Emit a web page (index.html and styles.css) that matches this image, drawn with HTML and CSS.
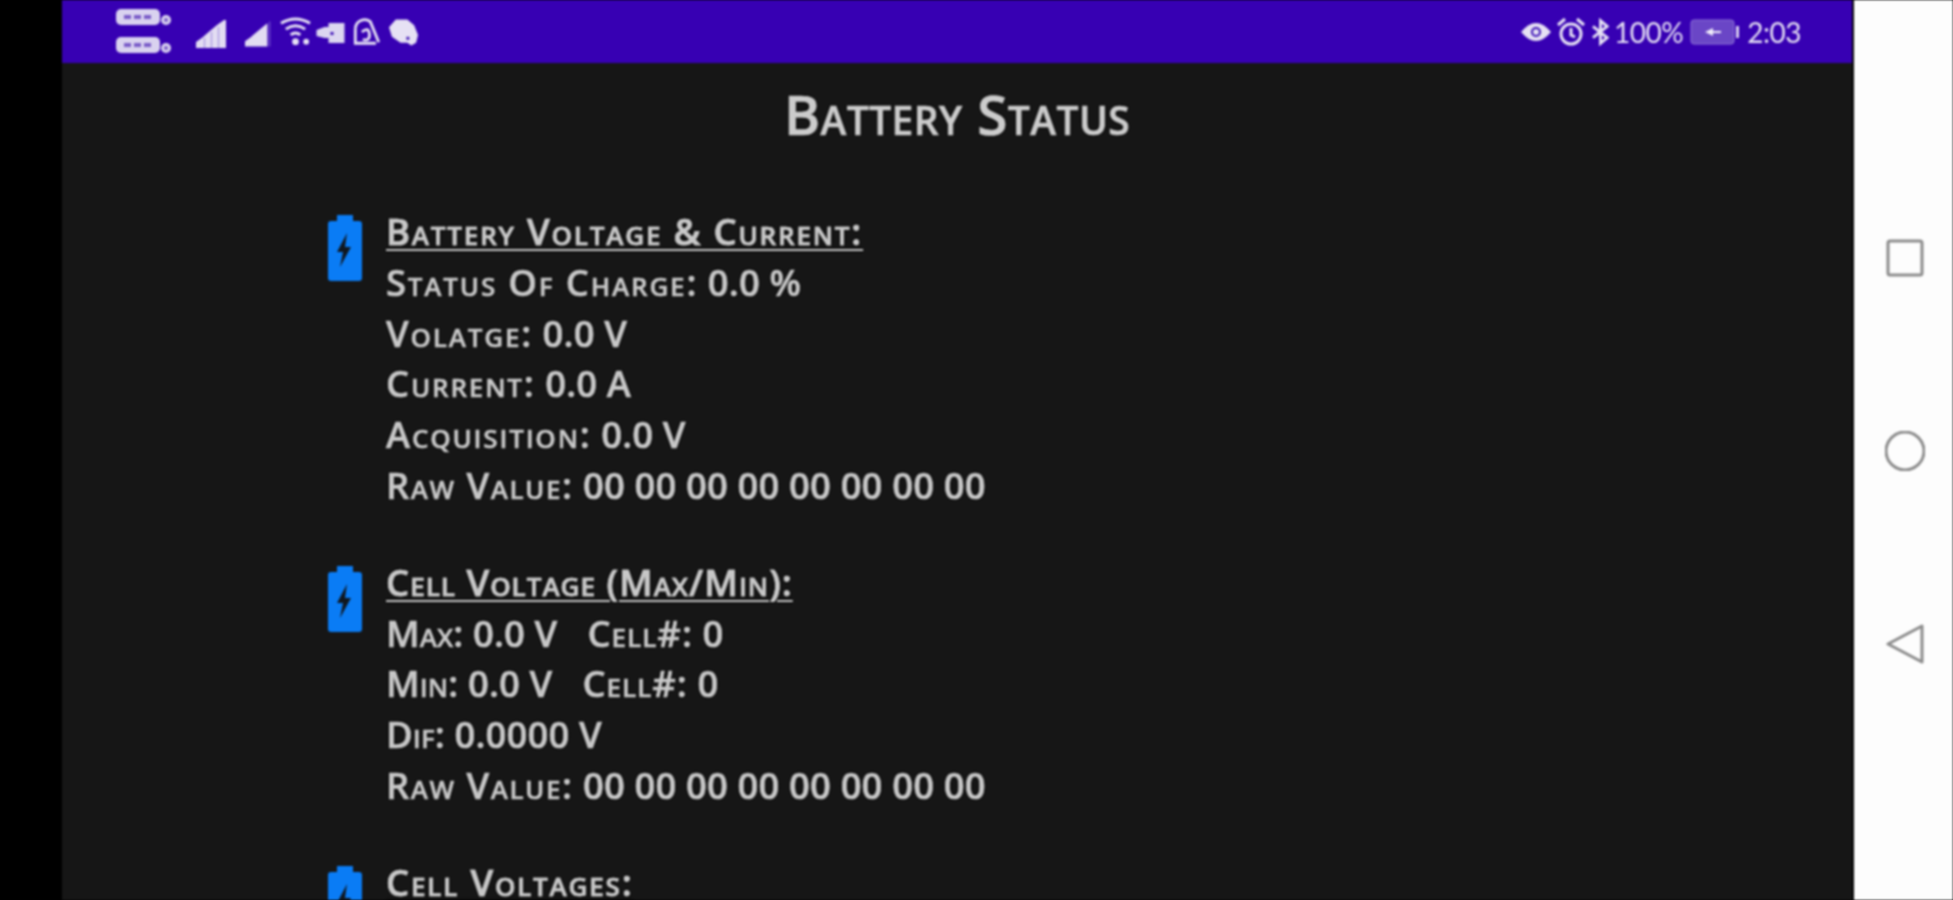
FILE: index.html
```html
<!DOCTYPE html>
<html lang="en">
<head>
<meta charset="utf-8">
<title>Battery Status</title>
<link rel="stylesheet" href="styles.css">
</head>
<body>
<div class="frame">
  <div class="screen">
    <header class="status">
      <div class="status-group">
        <svg class="sims" viewBox="0 0 56 46"><g fill="#d9d2ef"><rect x="0" y="0" width="44" height="16" rx="5"/><rect x="0" y="28" width="44" height="16" rx="5"/><circle cx="50" cy="11" r="5"/><circle cx="50" cy="39" r="5"/></g><g fill="#7a5cc8"><rect x="8" y="6" width="7" height="4"/><rect x="18" y="6" width="7" height="4"/><rect x="28" y="6" width="7" height="4"/><rect x="8" y="34" width="7" height="4"/><rect x="18" y="34" width="7" height="4"/><rect x="28" y="34" width="7" height="4"/><circle cx="50" cy="11" r="2"/><circle cx="50" cy="39" r="2"/></g></svg>
        <svg class="signal" viewBox="0 0 30 28"><path fill="#e2dcf2" d="M0 28v-6l7-5 1-1 7-6 6-5 7-5h2v28z"/><path fill="#a08be0" d="M8 28V18h1v10zM15 28V12h1v16zM22 28V7h1v21z"/></svg>
        <svg class="signal signal-2" viewBox="0 0 30 28"><path fill="#e2dcf2" d="M0 28v-6l7-5 1-1 7-6 6-5 4-3v26z"/><path fill="#8a70d8" d="M27 0h1v28h-1z"/></svg>
        <svg class="ico" viewBox="0 0 32 30"><g fill="none" stroke="#e6e1f4" stroke-width="3"><path d="M1 6q15-9 30 0"/><path d="M6 12q10-7 20 0"/><path d="M11 18q5-4 10 0"/></g><circle cx="16" cy="25" r="3.5" fill="#e6e1f4"/><circle cx="27" cy="25" r="3" fill="#e6e1f4"/></svg>
        <svg class="ico" viewBox="0 0 30 30"><path fill="#dcd6f0" d="M0 13l8-3h4V6h16v20H12v-5H8l-8-2z"/><path fill="#3c10b5" d="M14 15h3v3h-3z"/></svg>
        <svg class="ico" viewBox="0 0 32 32"><g fill="none" stroke="#e6e1f4" stroke-width="3"><path d="M3 12a10 10 0 0 1 16-7l9 22"/><path d="M3 12v16h22"/><path d="M10 16q7-6 8 2t-7 6"/></g></svg>
        <svg class="ico" viewBox="0 0 32 30"><path fill="#e6e1f4" d="M8 2h12l7 6 4 10-2 8-5 3-4-3H13L4 20 1 10z"/><path fill="#3c10b5" d="M19 20h3v3h-3z"/></svg>
      </div>
      <div class="status-group status-right">
        <svg class="ico-eye" viewBox="0 0 30 20"><path fill="#e6e1f4" d="M0 10Q15-8 30 10 15 28 0 10z"/><circle cx="15" cy="10" r="5" fill="#3c10b5"/><circle cx="15" cy="10" r="3" fill="#e6e1f4"/></svg>
        <svg class="ico-alarm" viewBox="0 0 28 30"><g fill="none" stroke="#e6e1f4" stroke-width="3"><circle cx="14" cy="17" r="10"/><path d="M1 8l7-6M27 8l-7-6M14 11v7l4 2"/></g></svg>
        <svg class="ico-bt" viewBox="0 0 18 28"><path fill="none" stroke="#e6e1f4" stroke-width="3" d="M1 8l15 12-7 6V2l7 6L1 20"/></svg>
        <span class="status-text">100%</span>
        <svg class="ico-batt" viewBox="0 0 50 26"><rect x="1" y="1" width="43" height="24" rx="3" fill="#6a46c6" stroke="#8f74d8"/><rect x="46" y="7" width="3" height="12" fill="#d9d2ef"/><path fill="#f0edf9" d="M15 13l8-4v3h8v2h-8v3z"/></svg>
        <span class="status-text status-time">2:03</span>
      </div>
    </header>
    <main class="content">
      <h1 class="title">Battery Status</h1>
      <section class="block">
        <svg class="batt" viewBox="0 0 34 66"><path fill="#0a7cf5" d="M9 0h16v6h6q3 0 3 3v54q0 3-3 3H3q-3 0-3-3V9q0-3 3-3h6z"/><path fill="#10171f" d="M19 18L9 37h6l-3 15 11-20h-6z"/></svg>
        <div class="lines">
          <h2 class="head lab">Battery Voltage &amp; Current:</h2>
          <p class="line"><span class="lab">Status Of Charge:</span> 0.0 %</p>
          <p class="line"><span class="lab">Volatge:</span> 0.0 V</p>
          <p class="line"><span class="lab">Current:</span> 0.0 A</p>
          <p class="line"><span class="lab">Acquisition:</span> 0.0 V</p>
          <p class="line"><span class="lab-raw">Raw Value:</span> 00 00 00 00 00 00 00 00</p>
        </div>
      </section>
      <section class="block">
        <svg class="batt" viewBox="0 0 34 66"><path fill="#0a7cf5" d="M9 0h16v6h6q3 0 3 3v54q0 3-3 3H3q-3 0-3-3V9q0-3 3-3h6z"/><path fill="#10171f" d="M19 18L9 37h6l-3 15 11-20h-6z"/></svg>
        <div class="lines">
          <h2 class="head lab-tight">Cell Voltage (Max/Min):</h2>
          <p class="line">Max: 0.0 V<span class="cell lab-tight">Cell#:</span> 0</p>
          <p class="line">Min: 0.0 V<span class="cell lab-tight">Cell#:</span> 0</p>
          <p class="line">Dif: 0.0000 V</p>
          <p class="line"><span class="lab-raw">Raw Value:</span> 00 00 00 00 00 00 00 00</p>
        </div>
      </section>
      <section class="block">
        <svg class="batt" viewBox="0 0 34 66"><path fill="#0a7cf5" d="M9 0h16v6h6q3 0 3 3v54q0 3-3 3H3q-3 0-3-3V9q0-3 3-3h6z"/><path fill="#10171f" d="M19 18L9 37h6l-3 15 11-20h-6z"/></svg>
        <div class="lines">
          <h2 class="head lab">Cell Voltages:</h2>
        </div>
      </section>
    </main>
  </div>
  <nav class="navbar">
    <svg class="nav-ico" viewBox="0 0 40 40"><rect x="3" y="3" width="34" height="34" rx="2" fill="none" stroke="#8c8c8c" stroke-width="3"/></svg>
    <svg class="nav-ico" viewBox="0 0 40 40"><circle cx="20" cy="20" r="19" fill="none" stroke="#8c8c8c" stroke-width="3"/></svg>
    <svg class="nav-ico" viewBox="0 0 40 40"><path d="M37 2v36L3 20z" fill="none" stroke="#8c8c8c" stroke-width="3" stroke-linejoin="round"/></svg>
  </nav>
</div>
</body>
</html>
```
FILE: styles.css
```css
* { box-sizing: border-box; }
html, body { margin: 0; height: 100%; background: #000; overflow: hidden; }
.frame {
  display: flex;
  height: 900px;
  width: 1953px;
  padding-left: 62px;
  font-family: "Open Sans", "Liberation Sans", sans-serif;
  font-variant: small-caps;
  filter: blur(0.9px);
}
.screen {
  width: 1792px;
  height: 900px;
  background: #161616;
  display: flex;
  flex-direction: column;
  overflow: hidden;
  border-right: 2px solid #050505;
}
.status {
  flex: none;
  height: 63px;
  background: #3700b3;
  display: flex;
  justify-content: space-between;
  align-items: center;
  padding: 0 51px 0 54px;
}
.status-group { display: flex; align-items: center; gap: 5px; }
.status-right { gap: 7px; }
.sims { width: 56px; height: 46px; margin-right: 19px; }
.signal { width: 30px; height: 28px; margin: 4px 14px 0 0; }
.signal-2 { margin-right: 3px; width: 27px; }
.ico { width: 31px; height: 30px; }
.ico-eye { width: 30px; height: 20px; margin-right: -1px; }
.ico-alarm { width: 28px; height: 30px; }
.ico-bt { width: 17px; height: 28px; margin-right: -2px; }
.ico-batt { width: 50px; height: 26px; }
.status-text {
  color: #e6e1f4;
  font-family: "Lato", "Liberation Sans", sans-serif;
  font-size: 28px;
  font-variant: normal;
  line-height: 30px;
  letter-spacing: -0.5px;
}
.content { padding: 0 0 0 266px; flex: 1; color: #c8c8c8; }
.title {
  margin: 20px 0 61px -266px;
  text-align: center;
  font-size: 55px;
  line-height: 62px;
  font-weight: 600;
  letter-spacing: 0.4px;
  color: #cccccc;
  -webkit-text-stroke: 0.7px #cccccc;
  text-shadow: 0 0 3px #000;
}
.block { display: flex; gap: 24px; margin-bottom: 46px; }
.batt { flex: none; width: 34px; height: 66px; margin-top: 9px; }
.lines { display: flex; flex-direction: column; }
.head, .line {
  margin: 0;
  font-size: 36.5px;
  line-height: 50.8px;
  font-weight: 600;
  letter-spacing: 0.1px;
  white-space: nowrap;
  -webkit-text-stroke: 0.6px #c8c8c8;
  text-shadow: 0 0 3px #000;
}
.head { text-decoration: underline; text-decoration-thickness: 2px; text-underline-offset: 4px; }
.lab { letter-spacing: 1.8px; }
.lab-raw { letter-spacing: 1.5px; }
.lab-tight { letter-spacing: 1px; }
.cell { margin-left: 30px; }
.navbar {
  flex: none;
  width: 99px;
  height: 900px;
  background: #fdfdfd;
  display: flex;
  flex-direction: column;
  align-items: center;
  gap: 153px;
  padding: 238px 0 0 3px;
}
.nav-ico { width: 40px; height: 40px; }
```
